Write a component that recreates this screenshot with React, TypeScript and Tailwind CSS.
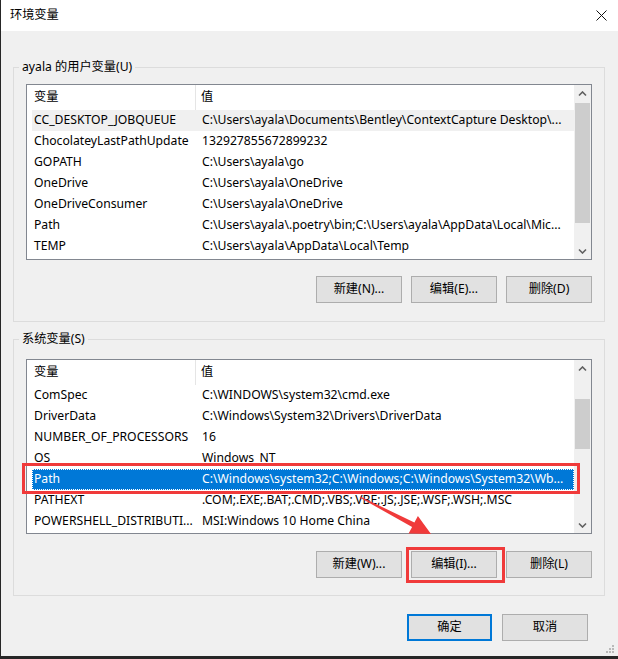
import React from "react";

type Row = { name: string; value: string };

const userRows: Row[] = [
  { name: "CC_DESKTOP_JOBQUEUE", value: "C:\\Users\\ayala\\Documents\\Bentley\\ContextCapture Desktop\\..." },
  { name: "ChocolateyLastPathUpdate", value: "132927855672899232" },
  { name: "GOPATH", value: "C:\\Users\\ayala\\go" },
  { name: "OneDrive", value: "C:\\Users\\ayala\\OneDrive" },
  { name: "OneDriveConsumer", value: "C:\\Users\\ayala\\OneDrive" },
  { name: "Path", value: "C:\\Users\\ayala\\.poetry\\bin;C:\\Users\\ayala\\AppData\\Local\\Mic..." },
  { name: "TEMP", value: "C:\\Users\\ayala\\AppData\\Local\\Temp" },
];

const systemRows: Row[] = [
  { name: "ComSpec", value: "C:\\WINDOWS\\system32\\cmd.exe" },
  { name: "DriverData", value: "C:\\Windows\\System32\\Drivers\\DriverData" },
  { name: "NUMBER_OF_PROCESSORS", value: "16" },
  { name: "OS", value: "Windows_NT" },
  { name: "Path", value: "C:\\Windows\\system32;C:\\Windows;C:\\Windows\\System32\\Wb..." },
  { name: "PATHEXT", value: ".COM;.EXE;.BAT;.CMD;.VBS;.VBE;.JS;.JSE;.WSF;.WSH;.MSC" },
  { name: "POWERSHELL_DISTRIBUTI...", value: "MSI:Windows 10 Home China" },
];

const Chevron = ({ down }: { down?: boolean }) => (
  <svg width="9" height="6" viewBox="0 0 9 6">
    <path
      d={down ? "M1 1.5 L4.5 5 L8 1.5" : "M1 4.5 L4.5 1 L8 4.5"}
      fill="none"
      stroke="#606060"
      strokeWidth="1.6"
    />
  </svg>
);

type ListProps = {
  rows: Row[];
  hovered?: number;
  selected?: number;
  heightClass: string;
  thumbClass: string;
};

const VarList = ({ rows, hovered, selected, heightClass, thumbClass }: ListProps) => (
  <div className={`flex w-[566px] border border-[#828790] bg-white ${heightClass}`}>
    <div className="flex min-w-0 flex-1 flex-col">
      <div className="flex h-[25px] shrink-0 items-stretch">
        <div className="flex w-[169px] items-center border-r border-[#e5e5e5] pl-[7px]">变量</div>
        <div className="flex items-center pl-[5px]">值</div>
      </div>
      <div className="flex flex-col pl-[5px]">
        {rows.map((row, i) => (
          <div
            key={row.name}
            className={
              i === selected
                ? "flex h-[21px] items-center bg-[#0078d7] text-white outline-1 outline-dotted outline-white -outline-offset-1"
                : i === hovered
                ? "flex h-[21px] items-center bg-[#f0f0f0]"
                : "flex h-[21px] items-center"
            }
          >
            <div className="w-[164px] shrink-0 overflow-hidden whitespace-nowrap pl-[2px]">{row.name}</div>
            <div className="min-w-0 flex-1 overflow-hidden whitespace-nowrap pl-[6px]">{row.value}</div>
          </div>
        ))}
      </div>
    </div>
    <div className="flex w-[17px] shrink-0 flex-col bg-[#f0f0f0]">
      <div className="flex h-[17px] items-center justify-center">
        <Chevron />
      </div>
      <div className="flex-1">
        <div className={`mx-[1px] bg-[#cdcdcd] ${thumbClass}`} />
      </div>
      <div className="flex h-[17px] items-center justify-center">
        <Chevron down />
      </div>
    </div>
  </div>
);

const Btn = ({ children, focused }: { children: React.ReactNode; focused?: boolean }) => (
  <button
    className={
      focused
        ? "flex h-[27px] w-[85px] items-center justify-center border-2 border-[#0078d7] bg-[#e1e1e1]"
        : "flex h-[27px] w-[86px] items-center justify-center border border-[#adadad] bg-[#e1e1e1]"
    }
  >
    {children}
  </button>
);

export default function App() {
  return (
    <div className="relative h-[659px] w-[618px] overflow-hidden bg-[#262626] font-['Noto_Sans','Noto_Sans_CJK_SC',sans-serif] text-[12.2px] text-black">
      <div className="relative ml-px flex h-[656px] w-[617px] flex-col bg-[#f0f0f0]">
        {/* title bar */}
        <div className="flex h-[31px] shrink-0 items-center justify-between bg-white pl-[9px] pr-[11px]">
          <span>环境变量</span>
          <svg width="11" height="11" viewBox="0 0 11 11">
            <path d="M0.5 0.5 L10.5 10.5 M10.5 0.5 L0.5 10.5" stroke="#111" strokeWidth="1" />
          </svg>
        </div>

        <div className="flex flex-col px-[12px]">
          <fieldset className="mt-[27px] w-[592px] border border-[#dcdcdc] px-[5px]">
            <legend className="px-[3px] leading-[18px]">ayala 的用户变量(U)</legend>
            <div className="px-[7px] pb-[18px] pt-[8px]">
              <VarList rows={userRows} hovered={0} heightClass="h-[176px]" thumbClass="mt-[1px] h-[120px]" />
              <div className="mt-[16px] flex justify-end gap-[9px]">
                <Btn>新建(N)...</Btn>
                <Btn>编辑(E)...</Btn>
                <Btn>删除(D)</Btn>
              </div>
            </div>
          </fieldset>

          <fieldset className="mt-[8px] w-[592px] border border-[#dcdcdc] px-[5px]">
            <legend className="px-[3px] leading-[18px]">系统变量(S)</legend>
            <div className="px-[7px] pb-[17px] pt-[11px]">
              <VarList rows={systemRows} selected={4} heightClass="h-[175px]" thumbClass="mt-[22px] h-[50px]" />
              <div className="mt-[17px] flex justify-end gap-[9px]">
                <Btn>新建(W)...</Btn>
                <Btn>编辑(I)...</Btn>
                <Btn>删除(L)</Btn>
              </div>
            </div>
          </fieldset>

          <div className="mt-[18px] flex justify-end gap-[10px] pr-[18px]">
            <Btn focused>确定</Btn>
            <Btn>取消</Btn>
          </div>
        </div>

        <svg className="absolute bottom-[2px] right-[3px]" width="11" height="11" viewBox="0 0 11 11">
          {[
            [8, 2],
            [5, 5],
            [8, 5],
            [2, 8],
            [5, 8],
            [8, 8],
          ].map(([x, y]) => (
            <rect key={`${x}-${y}`} x={x} y={y} width="2" height="2" fill="#b9b9b9" />
          ))}
        </svg>
      </div>

      {/* red annotations */}
      <div className="absolute left-[22px] top-[463px] h-[31px] w-[558px] border-[3px] border-[#f03a3a]" />
      <div className="absolute left-[406px] top-[547px] h-[36px] w-[99px] border-[3px] border-[#f03a3a]" />
      <svg className="absolute left-0 top-0" width="618" height="659" viewBox="0 0 618 659">
        <polygon
          points="359.7,497.5 360.3,496.5 414.4,522.5 417.9,515.9 431,534 408.6,533.6 412.1,527"
          fill="#f03a3a"
        />
      </svg>
    </div>
  );
}
